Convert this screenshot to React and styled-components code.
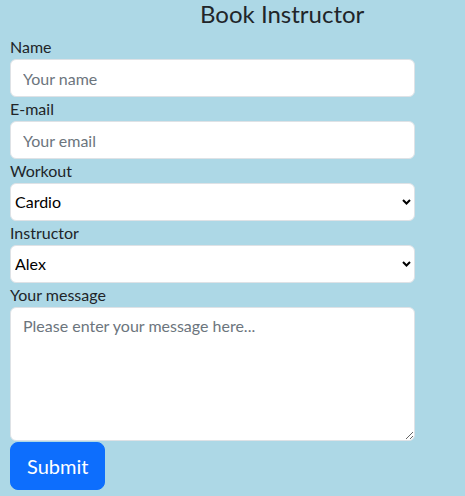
import React from "react";
import styled, { createGlobalStyle } from "styled-components";

const GlobalStyle = createGlobalStyle`
  html, body {
    margin: 0;
    padding: 0;
    background: #add8e6;
  }
  body {
    font-family: "Segoe UI", Lato, "Noto Sans", sans-serif;
    font-size: 16px;
    line-height: 1.5;
    color: #212529;
  }
  *, *::before, *::after {
    box-sizing: border-box;
  }
`;

const Page = styled.div`
  width: 465px;
  min-height: 496px;
  background: #add8e6;
  padding: 0 50px 0 10px;
`;

const Title = styled.h4`
  margin: 0 0 7px 0;
  padding-left: 190px;
  font-size: 24px;
  font-weight: 400;
  line-height: 28px;
  color: #212529;
`;

const Form = styled.form`
  display: flex;
  flex-direction: column;
  width: 405px;
`;

const Label = styled.label`
  display: block;
  font-size: 16px;
  line-height: 24px;
`;

const Input = styled.input`
  display: block;
  width: 100%;
  height: 38px;
  padding: 6px 12px;
  font: inherit;
  color: #212529;
  background: #fff;
  border: 1px solid #dee2e6;
  border-radius: 6px;
  outline: none;

  &::placeholder {
    color: #6c757d;
  }
`;

const SelectWrap = styled.div`
  position: relative;
`;

const Select = styled.select`
  display: block;
  width: 100%;
  height: 38px;
  padding: 6px 24px 6px 4px;
  font: inherit;
  color: #000;
  background: #fff;
  border: 1px solid #dee2e6;
  border-radius: 6px;
  appearance: none;
  outline: none;
`;

const Chevron = styled.svg`
  position: absolute;
  right: 4px;
  top: 16px;
  width: 9px;
  height: 6px;
  pointer-events: none;
`;

const TextArea = styled.textarea`
  display: block;
  width: 100%;
  height: 134px;
  padding: 6px 12px;
  font: inherit;
  color: #212529;
  background: #fff;
  border: 1px solid #dee2e6;
  border-radius: 6px;
  resize: vertical;
  outline: none;

  &::placeholder {
    color: #6c757d;
  }
`;

const SubmitButton = styled.button`
  align-self: flex-start;
  margin-top: 1px;
  padding: 8px 16px;
  font: inherit;
  font-size: 20px;
  line-height: 30px;
  color: #fff;
  background: #0d6efd;
  border: 1px solid #0d6efd;
  border-radius: 8px;
  cursor: pointer;
`;

function DropDown({ id, options }) {
  return (
    <SelectWrap>
      <Select id={id} defaultValue={options[0]}>
        {options.map((o) => (
          <option key={o}>{o}</option>
        ))}
      </Select>
      <Chevron viewBox="0 0 9 6">
        <path d="M1 1 L4.5 4.5 L8 1" fill="none" stroke="#000" strokeWidth="2" />
      </Chevron>
    </SelectWrap>
  );
}

export default function App() {
  return (
    <Page>
      <GlobalStyle />
      <Title>Book Instructor</Title>
      <Form onSubmit={(e) => e.preventDefault()}>
        <Label htmlFor="name">Name</Label>
        <Input id="name" placeholder="Your name" />
        <Label htmlFor="email">E-mail</Label>
        <Input id="email" type="email" placeholder="Your email" />
        <Label htmlFor="workout">Workout</Label>
        <DropDown id="workout" options={["Cardio", "Strength", "Yoga"]} />
        <Label htmlFor="instructor">Instructor</Label>
        <DropDown id="instructor" options={["Alex", "Maria", "John"]} />
        <Label htmlFor="message">Your message</Label>
        <TextArea id="message" rows={5} placeholder="Please enter your message here..." />
        <SubmitButton type="submit">Submit</SubmitButton>
      </Form>
    </Page>
  );
}
